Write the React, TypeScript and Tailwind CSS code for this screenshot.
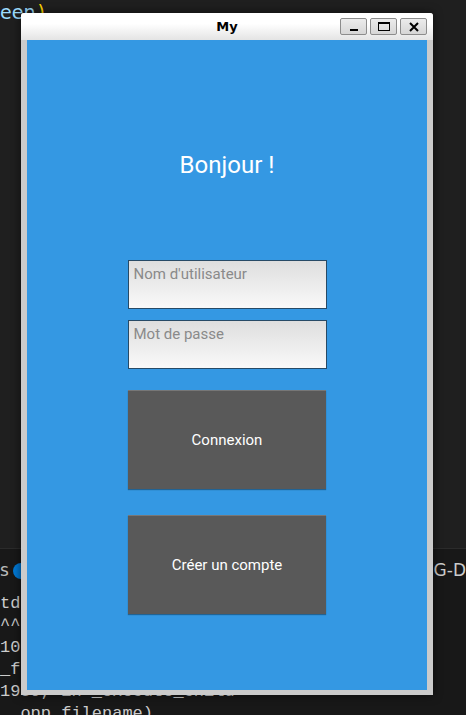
import React from "react";

const terminalLines = ["td", "^^^", "101", "_fr", "1959, in _execute_child", "  opp.filename)"];

function TitleButton({ children }: { children: React.ReactNode }) {
  return (
    <div className="flex h-[17px] w-[27px] items-center justify-center rounded-[2px] border border-[#8c8c8c] bg-gradient-to-b from-[#ececec] to-[#d6d6d6]">
      {children}
    </div>
  );
}

function Field({ placeholder }: { placeholder: string }) {
  return (
    <div className="h-[49px] w-[199px] border border-[#274a66] bg-gradient-to-b from-[#dedede] to-[#f9f9f9] px-[5px] pt-[4px] text-[15px] leading-[19px] text-[#8a8a8a]">
      {placeholder}
    </div>
  );
}

function KivyButton({ label }: { label: string }) {
  return (
    <div className="flex h-[99px] w-[198px] items-center justify-center border-t border-[#777] bg-[#595959] text-[15px] text-white shadow-[0_1px_1px_rgba(0,0,0,0.35)]">
      {label}
    </div>
  );
}

export default function App() {
  return (
    <div className="relative h-[715px] w-[466px] overflow-hidden bg-[#1f1f1f] font-['Roboto',sans-serif]">
      {/* editor behind the window */}
      <div className="flex h-full flex-col">
        <div className="h-[548px] shrink-0 pt-[1px] font-['DejaVu_Sans',sans-serif] text-[19px] leading-[22px] text-[#9cdcfe]">
          een<span className="ml-[2px] text-[#ffd700]">)</span>
        </div>
        <div className="flex shrink-0 flex-col border-t border-[#2b2b2b] bg-[#181818]">
          <div className="flex h-[44px] items-center justify-between font-['DejaVu_Sans',sans-serif] text-[17px] text-[#bbbbbb]">
            <div className="flex items-center gap-[4px]">
              <span>s</span>
              <span className="h-[16px] w-[16px] rounded-full bg-[#0078d4]" />
            </div>
            <span className="text-[#cccccc]">s - G-D</span>
          </div>
          <div className="flex flex-col font-['Liberation_Mono',monospace] text-[17px] leading-[22px] text-[#cccccc]">
            {terminalLines.map((l) => (
              <div key={l} className="whitespace-pre">
                {l}
              </div>
            ))}
          </div>
        </div>
      </div>

      {/* app window */}
      <div className="absolute left-[21px] top-[13px] flex h-[682px] w-[412px] flex-col rounded-t-[3px] bg-[#cbcbcb] shadow-[0_0_10px_rgba(0,0,0,0.6)]">
        <div className="relative flex h-[27px] items-center justify-center rounded-t-[3px] bg-gradient-to-b from-white from-40% to-[#e4e4e4]">
          <span className="font-['DejaVu_Sans',sans-serif] text-[13px] font-bold text-black">My</span>
          <div className="absolute right-[6px] top-[5px] flex gap-[3px]">
            <TitleButton>
              <span className="mt-[7px] h-[2px] w-[8px] bg-black" />
            </TitleButton>
            <TitleButton>
              <span className="h-[9px] w-[12px] border border-t-2 border-black" />
            </TitleButton>
            <TitleButton>
              <svg width="10" height="10" viewBox="0 0 10 10">
                <path d="M1 1 L9 9 M9 1 L1 9" stroke="black" strokeWidth="2" />
              </svg>
            </TitleButton>
          </div>
        </div>
        <div className="mx-[6px] mb-[5px] flex flex-1 flex-col items-center bg-[#3498e3]">
          <div className="mt-[109px] text-[24px] leading-[32px] text-white">Bonjour !</div>
          <div className="mt-[79px] flex flex-col gap-[11px]">
            <Field placeholder="Nom d'utilisateur" />
            <Field placeholder="Mot de passe" />
          </div>
          <div className="mt-[21px] flex flex-col gap-[26px]">
            <KivyButton label="Connexion" />
            <KivyButton label="Créer un compte" />
          </div>
        </div>
      </div>
    </div>
  );
}
